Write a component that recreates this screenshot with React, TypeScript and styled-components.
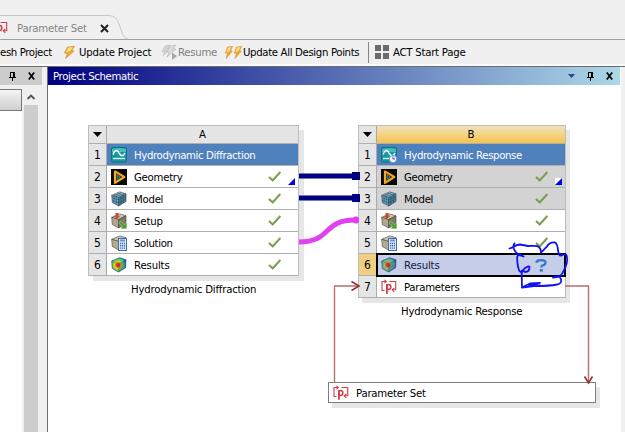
import React from "react";
import styled, { createGlobalStyle } from "styled-components";

const GlobalStyle = createGlobalStyle`
  * { box-sizing: border-box; }
  body {
    margin: 0;
    overflow: hidden;
    background: #f0f0f0;
    color: #000;
    font: 11.3px "DejaVu Sans Condensed", "DejaVu Sans", sans-serif;
    font-stretch: condensed;
  }
  svg { display: block; flex: none; overflow: visible; }
`;

const Window = styled.div`
  width: 625px;
  height: 432px;
  display: flex;
  flex-direction: column;
  overflow: hidden;
`;

const Label = styled.span<{ $ls?: number; $color?: string }>`
  display: block;
  padding-top: 2px;
  white-space: nowrap;
  line-height: 16px;
  letter-spacing: ${(p) => (p.$ls ?? -0.22) - 0.05}px;
  color: ${(p) => p.$color ?? "inherit"};
`;

/* ---------- tab strip and toolbar ---------- */

const TabStrip = styled.div`
  height: 40px;
  flex: none;
  border-bottom: 1px solid #a0a0a0;
  padding-top: 15px;
`;

const Tab = styled.div`
  position: relative;
  width: 130px;
  height: 24px;
  display: flex;
  align-items: center;
  padding-top: 2px;
`;

const TabShape = styled.svg`
  position: absolute;
  left: 0;
  top: 0;
`;

const TabContent = styled.div`
  position: relative;
  width: 109px;
  display: flex;
  align-items: center;
  justify-content: space-between;
`;

const TabName = styled.div`
  display: flex;
  align-items: center;
  gap: 9px;
  margin-left: -8px;
`;

const Toolbar = styled.div`
  height: 27px;
  flex: none;
  display: flex;
  align-items: center;
  border-bottom: 1px solid #6d6d6d;
  box-shadow: inset 0 -2px #fafafa;
  padding-bottom: 2px;
`;

const Tool = styled.div<{ $w: number; $gap?: number }>`
  width: ${(p) => p.$w}px;
  flex: none;
  display: flex;
  align-items: center;
  gap: ${(p) => p.$gap ?? 3}px;
`;

const Separator = styled.div`
  width: 1px;
  height: 21px;
  margin-right: 6px;
  background: #858585;
`;

/* ---------- panels ---------- */

const Panels = styled.div`
  flex: 1;
  min-height: 0;
  display: flex;
`;

const SidePanel = styled.div`
  width: 42px;
  margin-right: 5px;
  display: flex;
  flex-direction: column;
`;

const PanelHeader = styled.div<{ $active?: boolean }>`
  height: 18px;
  flex: none;
  display: flex;
  align-items: center;
  justify-content: ${(p) => (p.$active ? "space-between" : "flex-end")};
  gap: 12px;
  padding: 0 7px 0 5px;
  color: #fff;
  background: ${(p) =>
    p.$active ? "linear-gradient(90deg, #000080, #add8e6)" : "#cccccc"};
`;

const HeaderIcons = styled.div`
  display: flex;
  align-items: center;
  gap: 12px;
`;

const SideBody = styled.div`
  flex: 1;
  display: flex;
  gap: 2px;
  padding-top: 4px;
`;

const SideList = styled.div`
  width: 22px;
  background: #fff;
`;

const GroupButton = styled.div`
  height: 22px;
  border: 1px solid #777;
  border-left: 0;
  background: linear-gradient(#f4f4f4, #cfcfcf);
`;

const Scrollbar = styled.div`
  width: 14px;
  display: flex;
  flex-direction: column;
  align-items: center;
  padding-top: 5px;
  gap: 5px;
`;

const Thumb = styled.div`
  width: 14px;
  flex: 1;
  background: #cdcdcd;
`;

const MainPanel = styled.div`
  width: 573px;
  display: flex;
  flex-direction: column;
  border-left: 1px solid #6d6d6d;
`;

const Canvas = styled.div`
  position: relative;
  flex: 1;
  background: #fff;
`;

const PanelEdge = styled.div`
  width: 1px;
  background: #fff;
`;

/* ---------- schematic nodes on the canvas ---------- */

const SystemNode = styled.div<{ $x: number; $w: number }>`
  position: absolute;
  left: ${(p) => p.$x}px;
  top: 40px;
  width: ${(p) => p.$w}px;
`;

const SystemTable = styled.div<{ $shadow: number }>`
  border: 1px solid #bdbdbd;
  border-bottom: 0;
  box-shadow: ${(p) => p.$shadow}px 5px #e6e6e6;
`;

const Row = styled.div<{ $head?: boolean }>`
  display: grid;
  grid-template-columns: 18px 1fr;
  height: ${(p) => (p.$head ? 18 : 22)}px;
`;

const RowNumber = styled.div<{ $on?: boolean }>`
  display: flex;
  align-items: center;
  justify-content: center;
  font-size: 12px;
  border-right: 1px solid #aaa;
  border-bottom: 1px solid #b0b0b0;
  background: ${(p) => (p.$on ? "#f0d080" : "#e5e5e5")};
`;

const ColumnTitle = styled.div<{ $on?: boolean }>`
  text-align: center;
  line-height: 17px;
  border-bottom: 1px solid #b0b0b0;
  background: ${(p) =>
    p.$on ? "linear-gradient(#f1e2bd, #f3d078 60%, #f5c64c)" : "#e5e5e5"};
`;

type Kind = "title" | "shared" | "selected" | "plain";
const cellFill: Record<Kind, string> = {
  title: "#4f81bd",
  shared: "#d3d3d3",
  selected: "#c5cde8",
  plain: "#ffffff",
};

const Cell = styled.div<{ $kind: Kind }>`
  position: relative;
  display: flex;
  align-items: center;
  padding: 0 4px;
  gap: 7px;
  border-bottom: 1px solid #b0b0b0;
  color: ${(p) => (p.$kind === "title" ? "#fff" : "#000")};
  background: ${(p) => cellFill[p.$kind]};
  ${(p) =>
    p.$kind === "selected" &&
    `margin: -1px; padding: 0 3px; border: 2px solid #000; z-index: 1; color: #17213f;`}
`;

const Status = styled.div`
  margin-left: auto;
  width: 26px;
  flex: none;
`;

const Corner = styled.i`
  position: absolute;
  right: 3px;
  bottom: 2px;
  width: 7px;
  height: 7px;
  background: #fff;
  &::after {
    content: "";
    display: block;
    width: 7px;
    height: 7px;
    background: #0000ee;
    clip-path: polygon(100% 0, 100% 100%, 0 100%);
  }
`;

const Caption = styled.div`
  margin-top: 4px;
  padding-left: 43px;
`;

const ParameterNode = styled.div`
  position: absolute;
  left: 280px;
  top: 297px;
  width: 268px;
  height: 21px;
  display: flex;
  align-items: center;
  gap: 7px;
  padding-left: 4px;
  border: 1px solid #7d7d7d;
  background: #fff;
  box-shadow: 4px 5px #e6e6e6;
`;

const Overlay = styled.svg`
  position: absolute;
  left: 0;
  top: 0;
  z-index: 2;
  pointer-events: none;
`;

/* ---------- icons ---------- */

const Bolt = ({ w = 11 }: { w?: number }) => (
  <svg width={w} height="13" viewBox="0 0 11 13" preserveAspectRatio="none">
    <path d="M3.5 1 10.5.5 7.5 4.5 10 5 1.5 12.5 3.5 7.5.5 7Z" fill="#f3aa2c" stroke="#c98222" strokeWidth=".6" />
    <path d="M4.2 1.6 8.8 1.3 6 5 2 6.5Z" fill="#ffe08a" />
  </svg>
);

const ResumeIcon = () => (
  <svg width="17" height="17" viewBox="0 0 17 17">
    <path d="M4 2 9 1 7 5 9 5 2 12 4 8 1 8Z" fill="#d2d2d2" stroke="#bcbcbc" strokeWidth=".6" />
    <path d="M9 2 15 1 12 5 15 5 6 13 8 8 6 8Z" fill="#dadada" stroke="#b5b5b5" strokeWidth=".6" />
    <path d="M11 8.5 16 12 11 16Z" fill="#a9a9a9" />
  </svg>
);

const GridIcon = () => (
  <svg width="14" height="14">
    <path d="M0 0h6v6H0ZM8 0h6v6H8ZM0 8h6v6H0ZM8 8h6v6H8Z" fill="#6b6b6e" />
  </svg>
);

const CloseIcon = () => (
  <svg width="7" height="8" viewBox="0 0 7 8">
    <path d="M.8.5 6.2 7.5M6.2.5.8 7.5" stroke="#000" strokeWidth="1.7" />
  </svg>
);

const PinIcon = () => (
  <svg width="7" height="9" shapeRendering="crispEdges">
    <path d="M1 0h5v1H1ZM1 0h1v5H1ZM4 0h2v5H4ZM0 5h7v1H0ZM3 6h1v3H3Z" fill="#000" />
  </svg>
);

const ParamIcon = () => (
  <svg width="16" height="16" viewBox="0 0 16 16" fill="none" stroke="#cf3f45">
    <path d="M3.5 11.5H1V2.5H5M8.5 2.5H14.7V10.8H11.5" strokeWidth="1.1" />
    <path d="M3.5 .8 5.3 2.5 3.5 4.2M13.3 8.8 11.2 10.8 13.3 12.8" strokeWidth="1.1" />
    <path d="M5.9 14.8V5.3" strokeWidth="1.8" />
    <ellipse cx="7.8" cy="8" rx="2" ry="2.4" strokeWidth="1.5" />
  </svg>
);

const WaveIcon = ({ clock }: { clock?: boolean }) => (
  <svg width="16" height="16" viewBox="0 0 16 16">
    <rect x=".5" y=".5" width="15" height="14.5" rx="1.5" fill="#18979c" stroke="#0c7280" />
    <path d="M1 2Q8 0 15 2V5H1Z" fill="#44bdbd" />
    <path d="M2 7.5Q4.7.5 8 6T14 6" fill="none" stroke="#fff" strokeWidth="1.5" />
    <path d="M2 11.5H14" stroke="#e0ffff" strokeWidth="1.3" />
    {clock && (
      <g>
        <circle cx="12" cy="12" r="3.7" fill="#f0f4ff" stroke="#7299d8" />
        <path d="M12 9.5V12H14" fill="none" stroke="#4052b0" />
      </g>
    )}
  </svg>
);

const GeometryIcon = () => (
  <svg width="16" height="16" viewBox="0 0 16 16">
    <path d="M0 0h16v16H0Z" fill="#0b0907" />
    <path d="M4 2.5 13.3 8 4 13.8Z" fill="none" stroke="#eca925" strokeWidth="2.2" strokeLinejoin="round" />
    <path d="M6.3 6 9.3 8 6.3 10Z" fill="#153b4b" stroke="#359cbc" strokeWidth=".8" />
    <path d="M5.5 4.5V12M5.5 4.5 11 8" stroke="#7c5310" strokeWidth=".6" />
  </svg>
);

const Cube = ({ a, b, c }: { a: string; b: string; c: string }) => (
  <g stroke="#3f4242" strokeWidth=".6" strokeLinejoin="round">
    <path d="M.7 4.3 8.8.9 15 2.8 7.7 6.5Z" fill={a} />
    <path d="M.7 4.3 7.7 6.5V15L1.3 11.5Z" fill={b} />
    <path d="M7.7 6.5 15 2.8V10.5L7.7 15Z" fill={c} />
  </g>
);

const ModelIcon = () => (
  <svg width="16" height="16" viewBox="0 0 16 16">
    <Cube a="#a2cde4" b="#6ba3c4" c="#457e9f" />
    <path d="M3 5V12.4M5.3 5.7V13.7M1 6.7 7.7 9 15 5.3M1.2 9.2 7.7 11.9 15 8M10 5.3V13.5M12.5 4V12M3.4 3.2 10.2 5.2M6 2 12.7 4M3 5 10.8 1.5M5.3 5.8 13 2.2" stroke="#244a61" strokeWidth=".5" fill="none" />
  </svg>
);

const SetupIcon = () => (
  <svg width="16" height="16" viewBox="0 0 16 16">
    <Cube a="#cfc7af" b="#b0a78c" c="#807965" />
    <path d="M4.5 0h3v2.7H9.3L6 6.2 2.7 2.7H4.5Z" fill="#c3532e" />
    <path d="M8 9.8 9.8 8.3 13.2 11.6 15.8 9.8V15.8H9.6L11.4 13.3Z" fill="#4a9d27" stroke="#e8f0e0" strokeWidth=".4" />
  </svg>
);

const SolutionIcon = () => (
  <svg width="16" height="16" viewBox="0 0 16 16">
    <Cube a="#c9c2ab" b="#b4ab91" c="#847d69" />
    <rect x="7.5" y="3.5" width="8" height="12" fill="#dce8fa" stroke="#426dae" />
    <path d="M9 5.5h5" stroke="#7095cf" strokeWidth="2" />
    <path d="M9 8.5h5M9 10.8h5M9 13.1h5" stroke="#426dae" strokeWidth="1.4" strokeDasharray="1.2 .7" />
  </svg>
);

const ResultsIcon = ({ dim }: { dim?: boolean }) => {
  const id = dim ? "heatDim" : "heat";
  return (
    <svg width="16" height="16" viewBox="0 0 16 16">
      <defs>
        <radialGradient id={id} cx="7" cy="8" r="9" gradientUnits="userSpaceOnUse">
          <stop offset=".15" stopColor={dim ? "#bd3544" : "#ef2418"} />
          <stop offset=".36" stopColor={dim ? "#c6a650" : "#f8c51a"} />
          <stop offset=".56" stopColor={dim ? "#5fba75" : "#74dc28"} />
          <stop offset=".74" stopColor={dim ? "#3ba8bd" : "#18bdc5"} />
          <stop offset=".95" stopColor="#284bb7" />
        </radialGradient>
      </defs>
      <path d="M.7 4 8.5.7 15 2.8 14.6 10.8 7.5 15 1.3 11.5Z" fill={`url(#${id})`} stroke="#334a76" strokeWidth=".7" />
      <path d="M7.7 6.7 15 3 14.6 10.8 7.5 15Z" fill="#1c3c9c" fillOpacity=".3" />
      <path d="M1 4.3 7.7 6.7 15 3M7.7 6.7V15" fill="none" stroke="#555" strokeWidth=".4" />
    </svg>
  );
};

const Check = () => (
  <svg width="13" height="11" viewBox="0 0 13 11">
    <path d="M1 6 4.7 9.3 12.3 1" fill="none" stroke="#719442" strokeWidth="2" />
    <path d="M1.4 5.8 4.7 8.6 12 .8" fill="none" stroke="#a7c17c" strokeWidth=".6" />
  </svg>
);

const Question = () => (
  <svg width="12" height="13" viewBox="0 0 12 13">
    <path d="M1.2 3.7Q2 1.2 6 1.2 10.7 1.2 10.5 3.8 10.3 5.8 7.7 6.3 6.3 6.6 6.3 8.5" fill="none" stroke="#3477c6" strokeWidth="2.3" />
    <path d="M4.7 10.1h3.2v2.5H4.7Z" fill="#3477c6" />
  </svg>
);

/* ---------- data ---------- */

type RowData = {
  name: string;
  icon: React.ReactNode;
  kind?: Kind;
  status?: "ok" | "attention";
  corner?: boolean;
  ls?: number;
};

const systemA: RowData[] = [
  { name: "Hydrodynamic Diffraction", icon: <WaveIcon />, kind: "title", ls: -0.32 },
  { name: "Geometry", icon: <GeometryIcon />, status: "ok", corner: true },
  { name: "Model", icon: <ModelIcon />, status: "ok" },
  { name: "Setup", icon: <SetupIcon />, status: "ok", ls: -0.1 },
  { name: "Solution", icon: <SolutionIcon />, status: "ok", ls: -0.3 },
  { name: "Results", icon: <ResultsIcon />, status: "ok", ls: -0.1 },
];

const systemB: RowData[] = [
  { name: "Hydrodynamic Response", icon: <WaveIcon clock />, kind: "title", ls: -0.32 },
  { name: "Geometry", icon: <GeometryIcon />, kind: "shared", status: "ok", corner: true },
  { name: "Model", icon: <ModelIcon />, kind: "shared", status: "ok" },
  { name: "Setup", icon: <SetupIcon />, status: "ok", ls: -0.1 },
  { name: "Solution", icon: <SolutionIcon />, status: "ok", ls: -0.3 },
  { name: "Results", icon: <ResultsIcon dim />, kind: "selected", status: "attention", ls: -0.1 },
  { name: "Parameters", icon: <ParamIcon /> },
];

type SystemProps = { letter: string; x: number; w: number; rows: RowData[]; on?: boolean; shadow: number };

const System = ({ letter, x, w, rows, on, shadow }: SystemProps) => (
  <SystemNode $x={x} $w={w}>
    <SystemTable $shadow={shadow}>
      <Row $head>
        <RowNumber>
          <svg width="9" height="5"><path d="M0 0h9L4.5 5Z" /></svg>
        </RowNumber>
        <ColumnTitle $on={on}>{letter}</ColumnTitle>
      </Row>
      {rows.map((r, i) => (
        <Row key={r.name}>
          <RowNumber $on={r.kind === "selected"}>{i + 1}</RowNumber>
          <Cell $kind={r.kind ?? "plain"}>
            {r.icon}
            <Label $ls={r.ls}>{r.name}</Label>
            {r.status && <Status>{r.status === "ok" ? <Check /> : <Question />}</Status>}
            {r.corner && <Corner />}
          </Cell>
        </Row>
      ))}
    </SystemTable>
    <Caption><Label $ls={-0.16}>{rows[0].name}</Label></Caption>
  </SystemNode>
);

const Links = () => (
  <Overlay width="572" height="347" viewBox="48 85 572 347" fill="none">
    <path d="M299 176H356M299 198H356" stroke="#7777bb" strokeWidth="6" />
    <path d="M299 176H356M299 198H356" stroke="#000080" strokeWidth="4" />
    <path d="M352 172h8v8h-8ZM352 194h8v8h-8Z" fill="#000080" />
    <path d="M299 242C332 242 322 220 355 220" stroke="#e040f0" strokeWidth="5" />
    <path d="M353 217.5 355 216.5h2.5l1.5 1.5v4l-1.5 1.5H355l-2-1Z" fill="#e040f0" />
    <path d="M334.5 382V286H358M565 286H588.5V382" stroke="#b96e6e" strokeWidth="1.4" />
    <path d="M351.5 281.5 359 286 351.5 290.5M584.5 376.5 588.5 383 592.5 376.5" stroke="#963333" strokeWidth="1.6" />
    <path
      d="M509.5 248.5C515 247 515 244.5 520 244.5L528 246C534 246 537 245 539 247C541 249 541 251 541 252.5C543 251 545 248 547 246.5C549 243 552 242 555 242.5C559 244 557 254 560 255.5C563 256 563 253 566 254.5C568 257 567 264 565.5 267C563 272 562 276 559 276.5L553 277.5C557 276 560 276 561 279C562 284 559 284 557 284.5C550 286 538 286 534 286L522 287.7 521.7 273 523 270C526 266.5 529 266 529.5 267C529.5 270 528 272 525 272C523 271 523 269 521 272C518 272 517 261 517.2 257C518 254 520 254 523.5 256.5C518 255 515 252 514 249C513 246 513 245 514.5 243.5M522 287.5 530 283.5 540 282.8 529 285.2 540 285.5M529 285.2 533 286"
      stroke="#1111f2"
      strokeWidth="1.8"
      strokeLinejoin="round"
      strokeLinecap="round"
    />
  </Overlay>
);

export default function App() {
  return (
    <Window>
      <GlobalStyle />
      <TabStrip>
        <Tab>
          <TabShape width="130" height="25">
            <path d="M0 .5H108C115 .5 117 4 119 9 122 17 123 23 128 24" fill="none" stroke="#c6c9c2" />
          </TabShape>
          <TabContent>
            <TabName>
              <ParamIcon />
              <Label $ls={-0.18} $color="#858585">Parameter Set</Label>
            </TabName>
            <svg width="9" height="9" viewBox="0 0 9 9"><path d="M1 1 8 8M8 1 1 8" stroke="#222" strokeWidth="2.1" /></svg>
          </TabContent>
        </Tab>
      </TabStrip>
      <Toolbar>
        <Tool $w={64}><Label $ls={-0.33}>esh Project</Label></Tool>
        <Tool $w={97} $gap={4}><Bolt /><Label $ls={-0.12}>Update Project</Label></Tool>
        <Tool $w={64} $gap={0}><ResumeIcon /><Label $color="#808080">Resume</Label></Tool>
        <Tool $w={143} $gap={1}><Bolt w={8} /><Bolt w={8} /><Label $ls={-0.3}>Update All Design Points</Label></Tool>
        <Separator />
        <Tool $w={120} $gap={4}><GridIcon /><Label $ls={-0.2}>ACT Start Page</Label></Tool>
      </Toolbar>
      <Panels>
        <SidePanel>
          <PanelHeader><PinIcon /><CloseIcon /></PanelHeader>
          <SideBody>
            <SideList><GroupButton /></SideList>
            <Scrollbar>
              <svg width="8" height="6"><path d="M.5 5 4 1.5 7.5 5" fill="none" stroke="#555" strokeWidth="1.8" /></svg>
              <Thumb />
            </Scrollbar>
          </SideBody>
        </SidePanel>
        <MainPanel>
          <PanelHeader $active>
            <Label $ls={-0.3}>Project Schematic</Label>
            <HeaderIcons>
              <svg width="7" height="4"><path d="M0 0h7L3.5 4Z" fill="#30409a" /></svg>
              <PinIcon />
              <CloseIcon />
            </HeaderIcons>
          </PanelHeader>
          <Canvas>
            <System letter="A" x={40} w={211} rows={systemA} shadow={5} />
            <System letter="B" x={310} w={208} rows={systemB} shadow={4} on />
            <ParameterNode><ParamIcon /><Label $ls={-0.18}>Parameter Set</Label></ParameterNode>
            <Links />
          </Canvas>
        </MainPanel>
        <PanelEdge />
      </Panels>
    </Window>
  );
}
